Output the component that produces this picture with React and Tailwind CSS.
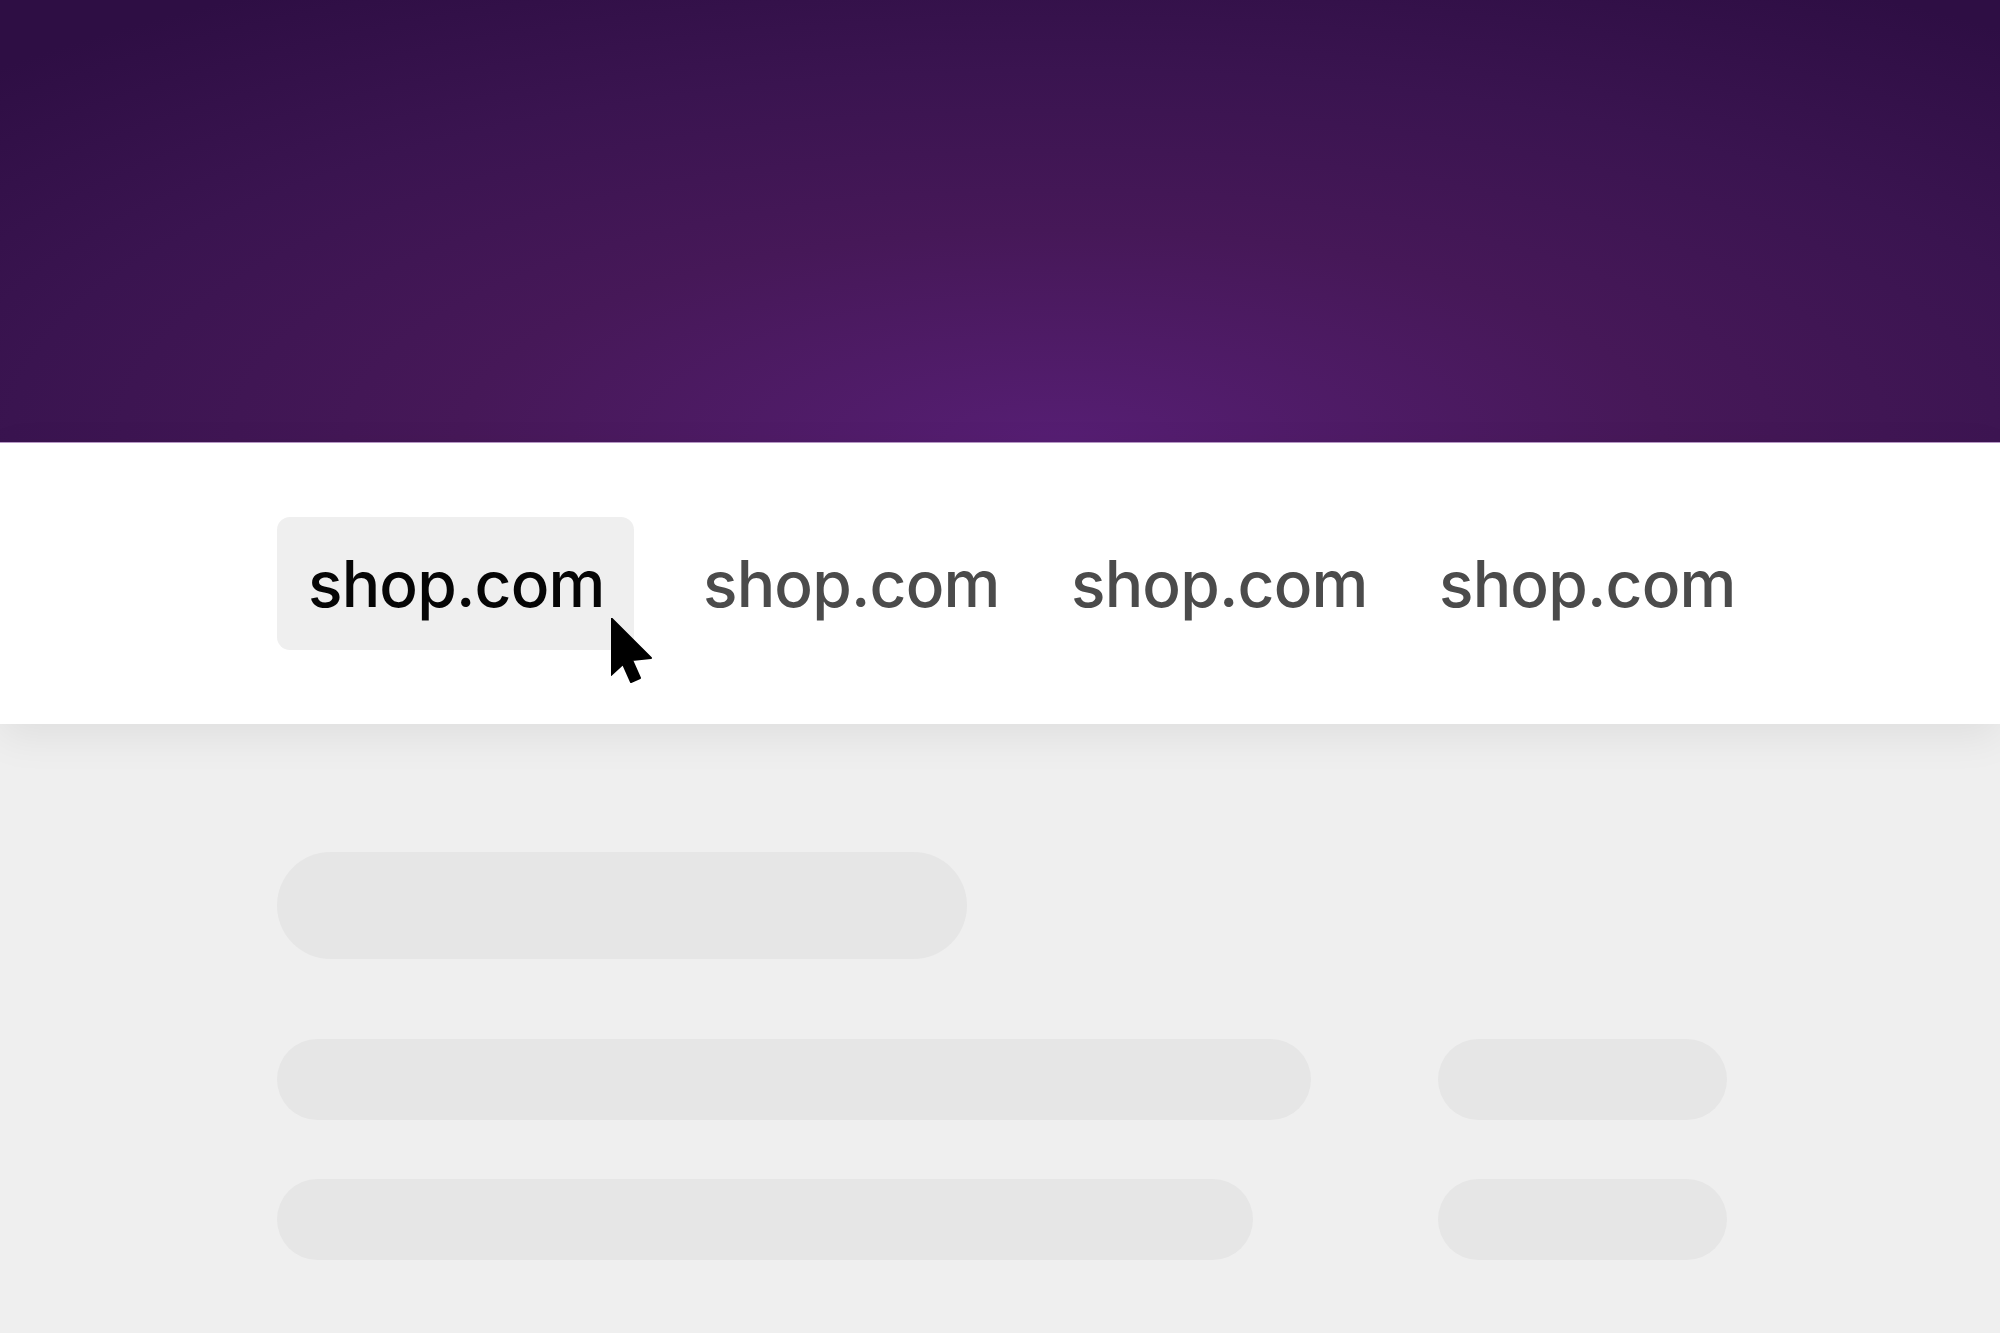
const font = { fontFamily: 'Inter, "Liberation Sans", sans-serif' }

function Cursor() {
  return (
    <svg
      width="42"
      height="66"
      viewBox="0 0 42 66"
      className="absolute left-[334px] top-[101px]"
    >
      <path d="M0 0 L0 57 L12 46 L20 64 L29 60 L21 42 L40 40 Z" fill="#000" stroke="#000" strokeWidth="2" strokeLinejoin="round" />
    </svg>
  )
}

function Tab({ active, children, className = '' }) {
  return (
    <div
      className={`relative flex items-center h-[133px] w-[357px] px-[31px] rounded-[13px] ${active ? 'bg-[#efefef] text-[#050505]' : 'text-[#4b4b4b]'} ${className}`}
    >
      <span className="text-[64px] font-medium leading-none tracking-[-0.8px]">{children}</span>
      {active && <Cursor />}
    </div>
  )
}

export default function App() {
  return (
    <div className="w-[2000px] h-[1333px] overflow-hidden bg-[#efefef] flex flex-col" style={font}>
      {/* hero */}
      <div className="h-[443px] shrink-0 border-b border-[#b99ac8] bg-[radial-gradient(ellipse_75%_120%_at_53%_100%,#561e73_0%,#461858_40%,#3a1450_70%,#2e0e44_100%)]" />

      {/* nav */}
      <div className="relative z-10 h-[281px] shrink-0 bg-white pl-[277px] pt-[74px] shadow-[0_12px_40px_rgba(0,0,0,0.07)]">
        <div className="flex items-start gap-[11px]">
          <Tab active>shop.com</Tab>
          <Tab className="ml-[27px]">shop.com</Tab>
          <Tab>shop.com</Tab>
          <Tab>shop.com</Tab>
        </div>
      </div>

      {/* skeleton */}
      <div className="pl-[277px] pt-[128px] flex flex-col">
        <div className="h-[107px] w-[690px] rounded-full bg-[#e6e6e6]" />
        <div className="mt-[80px] grid grid-cols-[1034px_289px] gap-x-[127px] gap-y-[59px]">
          <div className="h-[81px] w-[1034px] rounded-full bg-[#e6e6e6]" />
          <div className="h-[81px] w-[289px] rounded-full bg-[#e6e6e6]" />
          <div className="h-[81px] w-[976px] rounded-full bg-[#e6e6e6]" />
          <div className="h-[81px] w-[289px] rounded-full bg-[#e6e6e6]" />
        </div>
      </div>
    </div>
  )
}
